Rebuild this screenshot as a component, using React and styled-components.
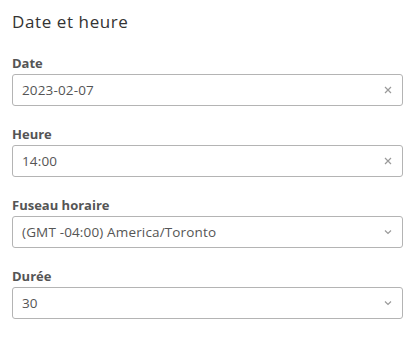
import React from 'react'
import styled, { createGlobalStyle } from 'styled-components'

const GlobalStyle = createGlobalStyle`
  body {
    margin: 0;
    background: #fff;
    font-family: "Open Sans", "Liberation Sans", sans-serif;
  }
`

const Panel = styled.div`
  width: 391px;
  padding: 11px 14px 12px 12px;
`

const Title = styled.h2`
  margin: 0 0 22px;
  font-size: 17px;
  line-height: 22px;
  font-weight: 400;
  letter-spacing: 0.6px;
  color: #333;
`

const Field = styled.div`
  display: flex;
  flex-direction: column;
  gap: 3px;
  margin-bottom: 20px;
`

const Label = styled.label`
  font-size: 13px;
  line-height: 16px;
  font-weight: 700;
  color: #555;
`

const Control = styled.div`
  height: 32px;
  box-sizing: border-box;
  border: 1px solid #b4b4b4;
  border-radius: 3px;
  display: flex;
  align-items: center;
  padding: 0 10px 0 9px;
  font-size: 13.5px;
  letter-spacing: 0.15px;
  color: #555;
`

const Value = styled.span`
  flex: 1;
`

const Icon = styled.svg`
  width: 8px;
  height: 8px;
  stroke: #9a9a9a;
  stroke-width: 1.2;
  fill: none;
`

const Clear = () => (
  <Icon viewBox="0 0 8 8">
    <path d="M1 1L7 7M7 1L1 7" />
  </Icon>
)

const Chevron = () => (
  <Icon viewBox="0 0 8 8">
    <path d="M1 2.5L4 5.5L7 2.5" />
  </Icon>
)

const fields = [
  { label: 'Date', value: '2023-02-07', kind: 'clear' },
  { label: 'Heure', value: '14:00', kind: 'clear' },
  { label: 'Fuseau horaire', value: '(GMT -04:00) America/Toronto', kind: 'select' },
  { label: 'Durée', value: '30', kind: 'select' },
]

const App = () => (
  <>
    <GlobalStyle />
    <Panel>
      <Title>Date et heure</Title>
      {fields.map(f => (
        <Field key={f.label}>
          <Label>{f.label}</Label>
          <Control>
            <Value>{f.value}</Value>
            {f.kind === 'clear' ? <Clear /> : <Chevron />}
          </Control>
        </Field>
      ))}
    </Panel>
  </>
)

export default App
